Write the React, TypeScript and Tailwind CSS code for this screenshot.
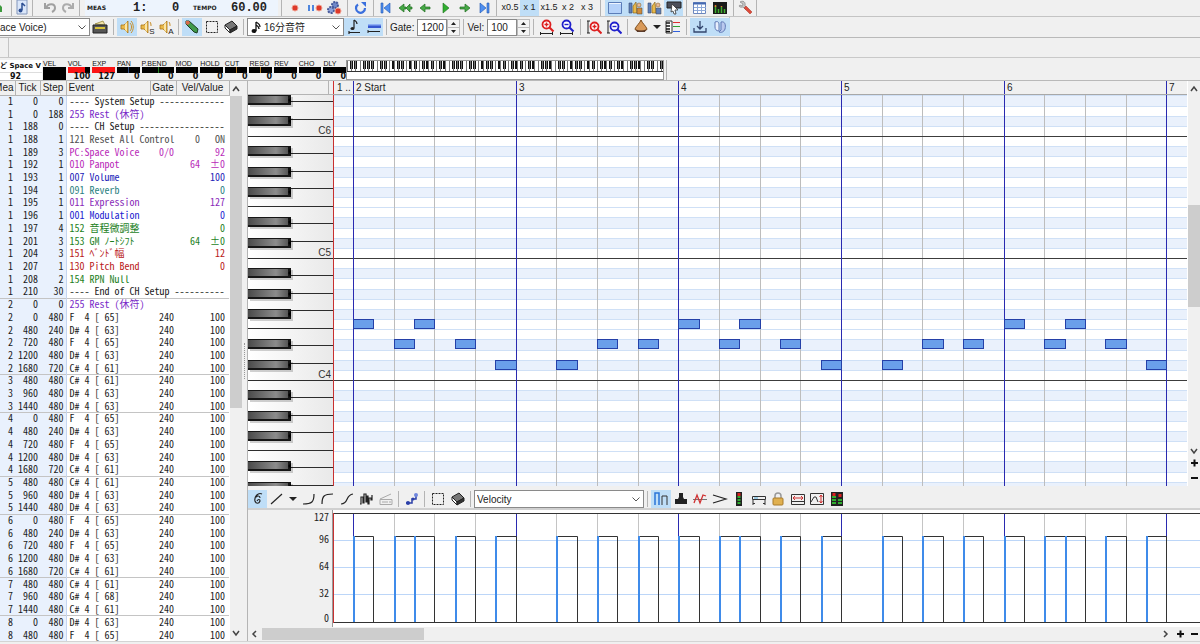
import type { ReactNode } from 'react'
import clsx from 'clsx'

type Row = {
  mea: number
  tick: number
  step: number
  event: string
  gate?: string
  mid?: string
  vel?: string
  color?: string
}

const setup: Row[] = [
  { mea: 1, tick: 0, step: 0, event: '---- System Setup -------------' },
  { mea: 1, tick: 0, step: 188, event: '255 Rest (休符)', color: 'text-[#7a2bc8]' },
  { mea: 1, tick: 188, step: 0, event: '---- CH Setup -----------------' },
  { mea: 1, tick: 188, step: 1, event: '121 Reset All Control', mid: '0', vel: 'ON', color: 'text-[#505050]' },
  { mea: 1, tick: 189, step: 3, event: 'PC:Space Voice', gate: '0/0', vel: '92', color: 'text-[#b92bb9]' },
  { mea: 1, tick: 192, step: 1, event: '010 Panpot', mid: '64', vel: '±0', color: 'text-[#b92bb9]' },
  { mea: 1, tick: 193, step: 1, event: '007 Volume', vel: '100', color: 'text-[#1d1db8]' },
  { mea: 1, tick: 194, step: 1, event: '091 Reverb', vel: '0', color: 'text-[#2b7f7f]' },
  { mea: 1, tick: 195, step: 1, event: '011 Expression', vel: '127', color: 'text-[#8a2bb9]' },
  { mea: 1, tick: 196, step: 1, event: '001 Modulation', vel: '0', color: 'text-[#1d1dd0]' },
  { mea: 1, tick: 197, step: 4, event: '152 音程微調整', vel: '0', color: 'text-[#1d7f1d]' },
  { mea: 1, tick: 201, step: 3, event: '153 GM ﾉｰﾄｼﾌﾄ', mid: '64', vel: '±0', color: 'text-[#1d7f1d]' },
  { mea: 1, tick: 204, step: 3, event: '151 ﾍﾞﾝﾄﾞ幅', vel: '12', color: 'text-[#b92020]' },
  { mea: 1, tick: 207, step: 1, event: '130 Pitch Bend', vel: '0', color: 'text-[#b92020]' },
  { mea: 1, tick: 208, step: 2, event: '154 RPN Null', color: 'text-[#1d7f1d]' },
  { mea: 1, tick: 210, step: 30, event: '---- End of CH Setup ----------' },
  { mea: 2, tick: 0, step: 0, event: '255 Rest (休符)', color: 'text-[#7a2bc8]' }
]

// measure, tick, step, key number
const notes = [
  [2, 0, 480, 65],
  [2, 480, 240, 63],
  [2, 720, 480, 65],
  [2, 1200, 480, 63],
  [2, 1680, 720, 61],
  [3, 480, 480, 61],
  [3, 960, 480, 63],
  [3, 1440, 480, 63],
  [4, 0, 480, 65],
  [4, 480, 240, 63],
  [4, 720, 480, 65],
  [4, 1200, 480, 63],
  [4, 1680, 720, 61],
  [5, 480, 480, 61],
  [5, 960, 480, 63],
  [5, 1440, 480, 63],
  [6, 0, 480, 65],
  [6, 480, 240, 63],
  [6, 720, 480, 65],
  [6, 1200, 480, 63],
  [6, 1680, 720, 61],
  [7, 480, 480, 61],
  [7, 960, 480, 68],
  [7, 1440, 480, 61],
  [8, 0, 480, 63],
  [8, 480, 480, 65]
]

const names: Record<number, string> = { 61: 'C#', 63: 'D#', 65: 'F ', 68: 'G#' }

const rows: Row[] = [
  ...setup,
  ...notes.map(([mea, tick, step, key]) => ({
    mea,
    tick,
    step,
    event: `${names[key]} 4 [ ${key}]`,
    gate: '240',
    vel: '100'
  }))
]

const MEASURE = 162.65
const xAt = (mea: number, tick: number) => Math.round(20 + (mea - 2 + tick / 1920) * MEASURE)
const yAt = (row: number) => Math.round(41 + (row * 122) / 12)

const visible = notes.filter(([mea]) => mea < 7)
const bars = [2, 3, 4, 5, 6, 7]
const beats = bars.flatMap((m) => [480, 960, 1440].map((t) => xAt(m, t)))
const semis = Array.from({ length: 100 }, (_, i) => i - 5)
const isBlack = (row: number) => [1, 3, 5, 8, 10].includes(((row % 12) + 12) % 12)

const Sep = () => <span className="mx-[3px] h-4 w-px shrink-0 bg-[#b4b4b4]" />

type ToolProps = { label: string; on?: boolean; w?: string; children: ReactNode }

const Tool = ({ label, on, w = 'w-5', children }: ToolProps) => (
  <button
    type="button"
    aria-label={label}
    className={clsx('flex h-full shrink-0 items-center justify-center', w, on && 'bg-[#bfdef7]')}
  >
    {children}
  </button>
)

const Ico = ({ children }: { children: ReactNode }) => (
  <svg width="16" height="16" viewBox="0 0 16 16" fill="none" className="shrink-0">
    {children}
  </svg>
)

const Speaker = ({ tag }: { tag?: string }) => (
  <span className="relative">
    <Ico>
      <path d="M2 6h3l4-4v12l-4-4H2z" fill="#e9b94a" stroke="#a87416" strokeWidth=".8" />
      <path d="M6 5l2-2v10l-2-2z" fill="#fbe6a8" />
      <path d={tag ? 'M11 3c1 1 1 3 1 4' : 'M11 4c2 2 2 6 0 8M12 2c3 3 3 9 0 12'} stroke="#c98f2a" />
    </Ico>
    {tag && <span className="absolute -bottom-px right-0 text-[8px] leading-[8px] text-[#222]">{tag}</span>}
  </span>
)

const Eraser = () => (
  <Ico>
    <path d="M2 6l7-4 5 5-7 4z" fill="#777" stroke="#222" />
    <path d="M2 6v3l5 5v-3z" fill="#fff" stroke="#222" />
    <path d="M7 11l7-4v3l-7 4z" fill="#333" stroke="#222" />
  </Ico>
)

const Marquee = () => (
  <Ico>
    <rect x="2.5" y="2.5" width="11" height="11" stroke="#222" strokeDasharray="2 1" />
  </Ico>
)

const Arrow = ({ left, double }: { left?: boolean; double?: boolean }) => (
  <Ico>
    <g transform={left ? 'matrix(-1 0 0 1 16 0)' : undefined} fill="#45a845" stroke="#1f6f1f" strokeWidth=".7">
      {double && <path d="M1 7h2V4l4 4-4 4V9H1z" />}
      <path d={double ? 'M7 7h2V4l5 4-5 4V9H7z' : 'M3 7h5V4l5 4-5 4V9H3z'} />
    </g>
  </Ico>
)

const Skip = ({ back }: { back?: boolean }) => (
  <Ico>
    <g transform={back ? 'matrix(-1 0 0 1 16 0)' : undefined} fill="#4f8ff0" stroke="#1f55b0" strokeWidth=".6">
      <path d="M4 3l6 5-6 5z" />
      <path d="M11 3h2v10h-2z" />
    </g>
  </Ico>
)

const Zoom = ({ color, minus, tall }: { color: string; minus?: boolean; tall?: boolean }) => (
  <Ico>
    <g transform={tall ? 'translate(1 2)' : undefined} stroke={color}>
      <circle cx="7.5" cy="5.5" r="4" strokeWidth="1.8" fill="#fff" />
      <path d="M10.500 8.500l4 4" strokeWidth="2.200" />
      <path d={minus ? 'M5.500 5.500h4' : 'M5.500 5.500h4M7.500 3.500v4'} strokeWidth="1.400" />
    </g>
    <path d={tall ? 'M2 2v12M1 2h3M1 14h3' : 'M1 14.500h13M1.500 13v3M13.500 13v3'} stroke="#222" />
  </Ico>
)

const Players = ({ hot }: { hot?: boolean }) => (
  <Ico>
    <path d="M2 3h3v10H2z" fill="#5f7fb8" stroke="#33466e" strokeWidth=".6" />
    <path d="M6 6l3-4 1 11H6z" fill="#e9b94a" stroke="#7a5412" strokeWidth=".6" />
    <circle cx="12" cy="5" r="2" fill="#e8b898" stroke="#7a5412" strokeWidth=".5" />
    <path d="M10 8h5v6h-5z" fill={hot ? '#5f7fb8' : '#d08a3a'} stroke="#444" strokeWidth=".5" />
  </Ico>
)

const Chevron = ({ dir }: { dir: 'up' | 'down' | 'left' | 'right' }) => {
  const d = {
    up: 'M3 8l3-4 3 4',
    down: 'M3 4l3 4 3-4',
    left: 'M8 3L5 6l3 3',
    right: 'M4 3l3 3-3 3'
  }
  return (
    <svg width="12" height="12" viewBox="0 0 12 12" fill="none" className="shrink-0">
      <path d={d[dir]} stroke="#444" strokeWidth="1.500" />
    </svg>
  )
}

const Sign = ({ plus }: { plus?: boolean }) => (
  <svg width="12" height="12" viewBox="0 0 12 12" className="shrink-0">
    <path d={plus ? 'M3 6h7M6.500 2.500v7' : 'M3 6h7'} stroke="#111" strokeWidth="2" />
  </svg>
)

const Combo = ({ label, value, w, children }: { label: string; value: string; w: string; children?: ReactNode }) => (
  <div className={clsx('flex h-[18px] shrink-0 items-center border border-[#8a8a8a] bg-white', w)}>
    {children}
    <select aria-label={label} className="h-4 min-w-0 flex-1 appearance-none bg-white text-[10px] text-[#222]">
      <option>{value}</option>
    </select>
    <svg width="12" height="12" viewBox="0 0 12 12" fill="none" className="mr-px shrink-0">
      <path d="M2.500 4.500L6 8l3.500-3.500" stroke="#555" />
    </svg>
  </div>
)

const Spin = ({ label, value }: { label: string; value: string }) => (
  <div className="flex h-[17px] items-center">
    <label className="flex h-full items-center gap-[3px]">
      {label}:
      <input
        defaultValue={value}
        className="h-full w-[30px] border border-[#8a8a8a] bg-white pl-[3px] text-[10px] text-[#222]"
      />
    </label>
    <button type="button" aria-label={`Step ${label}`} className="h-full w-[13px] border border-[#bbb] bg-[#f4f4f4]">
      <svg width="11" height="15" viewBox="0 0 11 15">
        <path d="M3 5h5L5.500 2zM3 10h5l-2.500 3z" fill="#222" />
        <path d="M0 7.500h11" stroke="#bbb" />
      </svg>
    </button>
  </div>
)

const TransportBar = () => (
  <div className="flex h-[17px] items-center overflow-hidden border-b border-[#c4c4c4]">
    <div className="flex h-4 w-[757px] shrink-0 items-center border-r border-[#b4b4b4]">
      <Tool label="New" w="w-2">
        <Ico>
          <path d="M0 5h4l2 2v5H0z" fill="#3e9a3e" />
        </Ico>
      </Tool>
      <Sep />
      <Tool label="Song file" w="w-[14px]">
        <Ico>
          <path d="M3 0h10v14H3z" fill="#dbe7fa" stroke="#8296bb" />
          <path d="M8 3v7M8 3l3 3" stroke="#2d4f93" strokeWidth="1.500" />
          <circle cx="6.500" cy="10.500" r="2" fill="#2d4f93" />
        </Ico>
      </Tool>
      <Sep />
      <span className="w-1" />
      <Tool label="Undo" w="w-[19px]">
        <Ico>
          <path d="M3 3v5h5M4 8c2-5 9-5 9 0 0 2-1 3-3 4" stroke="#a0a0a0" strokeWidth="2" />
        </Ico>
      </Tool>
      <Tool label="Redo" w="w-[17px]">
        <Ico>
          <path d="M13 3v5H8M12 8C10 3 3 3 3 8c0 2 1 3 3 4" stroke="#acacac" strokeWidth="2" />
        </Ico>
      </Tool>
      <Sep />
      <span className="w-[2px]" />
      <div className="flex h-full w-[193px] items-center bg-[#edf4fd] font-['Liberation_Mono',monospace] text-xs font-bold text-[#222]">
        <span className="w-12 pl-[2px] font-['DejaVu_Sans',sans-serif] text-[6px]">MEAS</span>
        <span className="w-[39px]">1:</span>
        <span className="w-[21px]">0</span>
        <span className="w-[38px] font-['DejaVu_Sans',sans-serif] text-[6px]">TEMPO</span>
        <span>60.00</span>
      </div>
      <Sep />
      <Tool label="Record">
        <Ico>
          <circle cx="8" cy="8" r="3" fill="#dd3a2a" stroke="#f0a090" />
        </Ico>
      </Tool>
      <Tool label="Pause record" w="w-[19px]">
        <Ico>
          <path d="M1 5h2v6H1zM5 5h2v6H5z" fill="#4f86dd" />
          <circle cx="12" cy="8" r="3" fill="#dd3a2a" stroke="#f0a090" />
        </Ico>
      </Tool>
      <Tool label="Record settings">
        <Ico>
          <circle cx="9" cy="5" r="3" fill="#7088c8" stroke="#46599a" strokeWidth="2" strokeDasharray="2 1" />
          <circle cx="5" cy="10" r="3" fill="#8da0d8" stroke="#46599a" strokeWidth="2" strokeDasharray="2 1" />
          <circle cx="12" cy="11" r="3" fill="#dd3a2a" stroke="#f0a090" />
        </Ico>
      </Tool>
      <Sep />
      <Tool label="Loop" w="w-[19px]">
        <Ico>
          <path d="M5 4.500a4.500 4.500 0 1 0 7 3.500" stroke="#3a6fdd" strokeWidth="2.200" />
          <path d="M8 2h5v5z" fill="#3a6fdd" />
        </Ico>
      </Tool>
      <Sep />
      <Tool label="To start" w="w-[18px]"><Skip back /></Tool>
      <Tool label="Rewind"><Arrow left double /></Tool>
      <Tool label="Back"><Arrow left /></Tool>
      <Tool label="Play">
        <Ico>
          <path d="M6 3l6 5-6 5z" fill="#2fae2f" stroke="#1f6f1f" strokeWidth=".6" />
        </Ico>
      </Tool>
      <Tool label="Forward"><Arrow /></Tool>
      <Tool label="To end" w="w-[18px]"><Skip /></Tool>
      <Sep />
      <div className="flex h-full text-[9px] text-[#222]">
        <Tool label="Speed 0.5">x0.5</Tool>
        <Tool label="Speed 1" on w="w-[19px]">x 1</Tool>
        <Tool label="Speed 1.5">x1.5</Tool>
        <Tool label="Speed 2" w="w-[18px]">x 2</Tool>
        <Tool label="Speed 3">x 3</Tool>
      </div>
      <Sep />
      <span className="w-px" />
      <Tool label="List" on>
        <Ico>
          <path d="M1.500 2.500h13v11h-13z" fill="#b5d2fa" stroke="#5b7db8" />
          <path d="M2 3.500h12" stroke="#eef5ff" />
        </Ico>
      </Tool>
      <Tool label="Staff view" on w="w-[19px]"><Players /></Tool>
      <Tool label="Band view"><Players hot /></Tool>
      <Tool label="Pointer view" on w="w-[19px]">
        <Ico>
          <path d="M1 2h14v6H1z" fill="#4c4f5a" stroke="#222" />
          <path d="M6 4l6 6-3 0 1 4-2 0-1-3-2 1z" fill="#fff" stroke="#333" strokeWidth=".8" />
        </Ico>
      </Tool>
      <Sep />
      <Tool label="Table">
        <Ico>
          <path d="M1.500 2.500h12v11h-12z" fill="#fff" stroke="#6b86bd" />
          <path d="M1 3.500h13" stroke="#4468b0" strokeWidth="2" />
          <path d="M2 7.500h12M2 10.500h12M5.500 4v9M9.500 4v9" stroke="#8ea9d8" />
        </Ico>
      </Tool>
      <Tool label="Meters">
        <Ico>
          <path d="M1 2h14v12H1z" fill="#1a1a1a" />
          <path d="M3.500 6v7M6.500 9v4M9.500 7v6M12.500 9v4" stroke="#3fae2f" strokeWidth="1.500" />
          <path d="M3.500 5v2M9.500 6v1" stroke="#e07b2a" strokeWidth="1.500" />
        </Ico>
      </Tool>
      <Sep />
      <Tool label="Settings" w="w-[17px]">
        <Ico>
          <path d="M2 2c3-2 6 0 5 4l3 3-2 1-3-3C2 8 0 6 2 5l2 1 1-2z" fill="#c4c4c4" stroke="#777" strokeWidth=".6" />
          <path d="M8 6l6 6-2 2-6-6z" fill="#dd4a3a" stroke="#a03020" strokeWidth=".5" />
        </Ico>
      </Tool>
    </div>
  </div>
)

const EditBar = () => (
  <div className="flex h-[21px] items-center overflow-hidden border-b border-[#b9b9b9] bg-[#f0f0f0]">
    <div className="flex h-5 w-[730px] shrink-0 items-center border-r border-[#c4c4c4] py-px text-[10px] text-[#222]">
      <Combo label="Patch" value="ace Voice)" w="w-[90px] border-l-0" />
      <Tool label="Voice box">
        <Ico>
          <path d="M3 5l8-3 2 4z" fill="#f1e3a8" stroke="#8a7a2a" strokeWidth=".7" />
          <path d="M1 6h14v8H1z" fill="#555" stroke="#222" />
          <path d="M3 9h10" stroke="#d8c23a" strokeWidth="2" />
        </Ico>
      </Tool>
      <Sep />
      <Tool label="Monitor" on><Speaker /></Tool>
      <Tool label="Solo monitor" w="w-[19px]"><Speaker tag="S" /></Tool>
      <Tool label="All monitor" w="w-[19px]"><Speaker tag="A" /></Tool>
      <Sep />
      <Tool label="Pencil" on>
        <Ico>
          <path d="M2 2l3 0 9 8-1 4-3-1-8-8z" fill="#3f9a4a" stroke="#1c3f22" />
          <path d="M2 2l3 0 1 2-2 2-2-1z" fill="#d86a4a" />
        </Ico>
      </Tool>
      <Tool label="Select area" w="w-[19px]"><Marquee /></Tool>
      <Tool label="Eraser" w="w-[19px]"><Eraser /></Tool>
      <Sep />
      <Combo label="Note length" value="16分音符" w="w-[97px]">
        <Ico>
          <path d="M8 3v9M8 3c2 1 4 2 4 5M8 6c2 1 3 2 3 4" stroke="#111" strokeWidth="1.300" />
          <ellipse cx="6" cy="12" rx="2.500" ry="2" fill="#111" />
        </Ico>
      </Combo>
      <Tool label="Step note" on>
        <Ico>
          <path d="M8 1v8M8 1c2 1 3 2 3 4M3 13.500h11M3 12v3" stroke="#222" strokeWidth="1.200" />
          <ellipse cx="6.500" cy="9.500" rx="2" ry="1.500" fill="#222" />
        </Ico>
      </Tool>
      <Tool label="Gate bar" on w="w-[19px]">
        <Ico>
          <path d="M2 5h13v4H2z" fill="#3557d0" />
          <path d="M2 5h13v1.500H2z" fill="#8fb0f5" />
          <path d="M2 12.500h12M2 11v3" stroke="#222" />
        </Ico>
      </Tool>
      <Sep />
      <Spin label="Gate" value="1200" />
      <Sep />
      <span className="w-px" />
      <Spin label="Vel" value="100" />
      <Sep />
      <span className="w-px" />
      <Tool label="Zoom in horizontally"><Zoom color="#dd2020" /></Tool>
      <Tool label="Zoom out horizontally"><Zoom color="#2020cc" minus /></Tool>
      <Sep />
      <Tool label="Zoom in vertically"><Zoom color="#dd2020" tall /></Tool>
      <Tool label="Zoom out vertically"><Zoom color="#2020cc" minus tall /></Tool>
      <Sep />
      <Tool label="Colour">
        <Ico>
          <path d="M8 1c1 3 5 6 6 9 0 3-12 3-12 0 1-3 5-6 6-9z" fill="#d99a5a" stroke="#7a4a1a" />
          <path d="M3 10c2 2 8 2 10 0l-1 3H4z" fill="#5a3a2a" />
        </Ico>
      </Tool>
      <Tool label="Colour menu" w="w-3">
        <svg width="8" height="8" viewBox="0 0 8 8"><path d="M0 2h8L4 6z" fill="#222" /></svg>
      </Tool>
      <Tool label="Tracks">
        <Ico>
          <path d="M1 2h6v12H1z" fill="#fff" stroke="#333" />
          <path d="M1 4h4M1 7h4M1 10h4M1 12.500h4" stroke="#111" strokeWidth="1.500" />
          <path d="M8 3.500h7" stroke="#dd3030" />
          <path d="M8 7.500h7" stroke="#30a030" />
          <path d="M8 12.500h7" stroke="#3060dd" />
        </Ico>
      </Tool>
      <Sep />
      <Tool label="Insert" on>
        <Ico>
          <path d="M8 2v8M5 7l3 3 3-3M2 9v4h12V9" stroke="#33466e" strokeWidth="1.300" />
        </Ico>
      </Tool>
      <Tool label="Magnet" on>
        <Ico>
          <path d="M3 3c3-1 4 0 4 3v6C4 12 3 10 3 8z" fill="#e8effc" stroke="#5f79b5" />
          <path d="M9 3c4-1 5 3 4 7-1 3-4 4-6 3l2-2z" fill="#b9c9ee" stroke="#5f79b5" />
        </Ico>
      </Tool>
    </div>
  </div>
)

const meters = [
  { name: 'VOL', value: 100, fill: 'bg-[#fa1414] w-[78%]' },
  { name: 'EXP', value: 127, fill: 'bg-[#fa1414] w-full' },
  { name: 'PAN', value: 0, fill: 'bg-[#2c4a80] w-px ml-[11px]' },
  { name: 'P.BEND', value: 0, fill: 'bg-[#1f7f1f] w-px ml-4' },
  { name: 'MOD', value: 0, fill: '' },
  { name: 'HOLD', value: 0, fill: '' },
  { name: 'CUT', value: 0, fill: 'bg-[#b07a2a] w-px ml-[11px]' },
  { name: 'RESO', value: 0, fill: 'bg-[#b07a2a] w-px ml-[11px]' },
  { name: 'REV', value: 0, fill: '' },
  { name: 'CHO', value: 0, fill: '' },
  { name: 'DLY', value: 0, fill: '' }
]

const MiniKeys = () => (
  <svg width="318" height="20" className="shrink-0 border border-[#999] bg-white">
    {Array.from({ length: 75 }, (_, i) => {
      const x = Math.round(i * 4.24)
      return (
        <g key={i}>
          <rect x={x} y="0" width="1" height="10" fill="#777" />
          {![2, 6].includes(i % 7) && <rect x={x + 3} y="0" width="3" height="8" fill="#111" />}
        </g>
      )
    })}
    <rect x="0" y="10" width="100%" height="1" fill="#333" />
  </svg>
)

const ChannelStrip = () => (
  <div className="flex h-[23px] items-start overflow-hidden border-b border-[#b9b9b9] bg-[#f0f0f0] pt-[2px]">
    <div className="h-5 w-[42px] shrink-0 overflow-hidden bg-white font-['DejaVu_Sans','Noto_Sans_CJK_JP',sans-serif] font-bold text-[#111]">
      <div className="flex h-3 items-center whitespace-nowrap text-[7px]">ど Space V</div>
      <div className="h-2 border-t border-[#ddd] pl-[10px] text-[8px] leading-[8px]">92</div>
    </div>
    <div className="flex w-[304px] shrink-0 gap-[2px] pl-px">
      <div className="min-w-0 flex-1">
        <div className="h-[7px] text-[7px] leading-[8px] text-[#111]">VEL</div>
        <div className="h-[13px] bg-black" />
      </div>
      {meters.map((m) => (
        <div key={m.name} className={m.name === 'P.BEND' ? 'w-8' : 'min-w-0 flex-1'}>
          <div className="h-[7px] text-[7px] leading-[8px] text-[#111]">{m.name}</div>
          <div className="h-[6px] bg-black">
            <div className={clsx('h-full', m.fill)} />
          </div>
          <div className="h-[7px] text-right font-['DejaVu_Sans',sans-serif] text-[8px] font-bold leading-[8px] text-[#111]">
            {m.value}
          </div>
        </div>
      ))}
    </div>
    <MiniKeys />
    <span className="ml-[2px] h-full w-px bg-[#b4b4b4]" />
  </div>
)

const th = 'border-r border-[#b4b4b4] p-0 font-normal leading-3'

const EventList = () => (
  <div className="flex w-[243px] shrink-0 overflow-hidden">
    <table className="h-full w-[229px] table-fixed border-collapse bg-white text-[10px] leading-[10px] text-[#1c1c1c]">
      <colgroup>
        <col className="w-[15px]" />
        <col className="w-[25px]" />
        <col className="w-[26px]" />
        <col className="w-[84px]" />
        <col className="w-[26px]" />
        <col className="w-6" />
        <col className="w-[29px]" />
      </colgroup>
      <thead>
        <tr className="h-[14px] border-b border-[#b4b4b4] bg-[#f0f0f0]">
          <th className={th}><span className="flex justify-end pr-px">Mea</span></th>
          <th className={th}>Tick</th>
          <th className={th}>Step</th>
          <th className={clsx(th, 'pl-[2px] text-left')}>Event</th>
          <th className={th}>Gate</th>
          <th colSpan={2} className={th}>Vel/Value</th>
        </tr>
      </thead>
      <tbody className="whitespace-pre font-['Noto_Sans_Mono_CJK_JP','Noto_Sans_CJK_JP',monospace]">
        {rows.map((r, i) => (
          <tr
            key={i}
            className={clsx('border-t', i > 0 && rows[i - 1].mea !== r.mea ? 'border-[#c4c4c4]' : 'border-transparent')}
          >
            <td className="bg-[#e9f1fd] p-0 pb-px pr-[2px] text-right">{r.mea}</td>
            <td className="bg-[#e9f1fd] p-0 pb-px pr-[2px] text-right">{r.tick}</td>
            <td className="border-r border-r-[#c5d6f0] bg-[#e9f1fd] p-0 pb-px pr-[2px] text-right">{r.step}</td>
            <td className={clsx('p-0 pb-px pl-[3px]', r.color)}>{r.event}</td>
            <td className={clsx('p-0 pb-px pr-[2px] text-right', r.color)}>{r.gate}</td>
            <td className={clsx('p-0 pb-px text-right', r.color)}>{r.mid}</td>
            <td className={clsx('p-0 pb-px pr-1 text-right', r.color)}>{r.vel}</td>
          </tr>
        ))}
      </tbody>
    </table>
    <div className="flex w-[14px] flex-col items-center bg-[#f0f0f0] py-[2px]">
      <Chevron dir="up" />
      <div className="mt-px h-[312px] w-3 bg-[#cdcdcd]" />
      <div className="flex-1" />
      <Chevron dir="down" />
    </div>
  </div>
)

const Keyboard = () => (
  <div className="flex w-[85px] shrink-0 flex-col">
    <div className="h-[14px] border-b border-[#b4b4b4] bg-[#f0f0f0] pr-1">
      <div className="h-full border-r border-[#b4b4b4]" />
    </div>
    <div className="relative min-h-0 flex-1 overflow-hidden">
      <svg width="85" height="100%" className="absolute inset-0">
        <defs>
          <linearGradient id="ivory">
            <stop offset="0" stopColor="#fff" />
            <stop offset="1" stopColor="#e9e9e9" />
          </linearGradient>
          <linearGradient id="ebony">
            <stop offset="0" stopColor="#4a4a4a" />
            <stop offset=".7" stopColor="#8c8c8c" />
            <stop offset="1" stopColor="#555" />
          </linearGradient>
        </defs>
        <rect width="85" height="100%" fill="url(#ivory)" />
        {Array.from({ length: 60 }, (_, i) => (
          <rect key={i} x="0" y={Math.round(41 + ((i - 2) * 122) / 7)} width="85" height="1" fill="#2c2c2c" />
        ))}
        {semis.filter(isBlack).map((k) => (
          <g key={k}>
            <rect x="2" y={yAt(k) + 2} width="43" height="10" fill="#000" opacity=".18" />
            <rect x="0" y={yAt(k)} width="43" height="10" fill="#161616" />
            <rect x="0" y={yAt(k) + 1} width="40" height="7" fill="url(#ebony)" />
            <path d={`M43 ${yAt(k) + 2}l-3 3 3 3z`} fill="#000" />
          </g>
        ))}
      </svg>
      {[6, 5, 4].map((n, i) => (
        <span
          key={n}
          className="absolute right-[2px] text-[10px] leading-3 text-[#333]"
          style={{ top: 30 + i * 122 }}
        >
          C{n}
        </span>
      ))}
    </div>
  </div>
)

const Ruler = () => (
  <div className="flex h-[14px] overflow-hidden border-b border-[#a8a8a8] bg-[#f0f0f0] text-[10px] leading-[14px] text-[#222]">
    <span className="shrink-0 border-l border-[#d03030] pl-[3px]" style={{ width: xAt(2, 0) }}>
      1 ..
    </span>
    {bars.map((m) => (
      <span
        key={m}
        className="shrink-0 border-l border-[#2a2ab0] pl-[2px]"
        style={{ width: xAt(m + 1, 0) - xAt(m, 0) }}
      >
        {m === 2 ? '2 Start' : m}
      </span>
    ))}
  </div>
)

const Grid = () => (
  <svg width="100%" height="100%" className="absolute inset-0 bg-white">
    {semis.map((k) => (
      <g key={k}>
        {isBlack(k) && <rect x="0" y={yAt(k)} width="100%" height={yAt(k + 1) - yAt(k)} fill="#eaf1fc" />}
        <rect x="0" y={yAt(k)} width="100%" height="1" fill="#cfe0f6" />
      </g>
    ))}
    {beats.map((x) => (
      <rect key={x} x={x} y="0" width="1" height="100%" fill="#bdbdbd" />
    ))}
    {semis.filter((k) => k % 12 === 0).map((k) => (
      <rect key={k} x="0" y={yAt(k)} width="100%" height="1" fill="#3c3c3c" />
    ))}
    {bars.map((m) => (
      <rect key={m} x={xAt(m, 0)} y="0" width="1" height="100%" fill="#2a2ab0" />
    ))}
    <rect x="0" y="0" width="1" height="100%" fill="#c83030" />
    {visible.map(([mea, tick, , key], i) => {
      const x = xAt(mea, tick)
      return (
        <rect
          key={i}
          x={x + 0.5}
          y={yAt(83 - key) + 0.5}
          width={xAt(mea, tick + 240) - x}
          height="9"
          fill="#6a9fea"
          stroke="#2440a8"
        />
      )
    })}
  </svg>
)

const PianoRoll = () => (
  <div className="flex min-h-0 flex-1">
    <Keyboard />
    <div className="flex min-w-0 flex-1 flex-col">
      <Ruler />
      <div className="relative min-h-0 flex-1 overflow-hidden">
        <Grid />
      </div>
    </div>
    <div className="flex w-[13px] flex-col items-center border-l border-white bg-[#f0f0f0] py-[2px]">
      <Chevron dir="up" />
      <div className="h-[110px]" />
      <div className="h-[102px] w-3 bg-[#cdcdcd]" />
      <div className="flex-1" />
      <Chevron dir="down" />
      <Sign plus />
      <span className="h-[3px]" />
      <Sign />
    </div>
  </div>
)

const Curve = ({ d }: { d: string }) => (
  <Ico>
    <path d={d} stroke="#222" strokeWidth="1.200" />
  </Ico>
)

const ControllerBar = () => (
  <div className="flex h-6 shrink-0 items-center border-b-2 border-[#d0d0d0] bg-[#f0f0f0] pt-1 text-[10px]">
    <Tool label="Freehand" on w="w-[19px]">
      <Curve d="M12 3C8 1 4 6 5 10c1 3 4 3 5 0 0-2-2-2-3 0M6 6c1-1 4-2 4 1" />
    </Tool>
    <Tool label="Line"><Curve d="M2 13L13 3" /></Tool>
    <Tool label="Line menu" w="w-3">
      <svg width="8" height="8" viewBox="0 0 8 8"><path d="M0 2h8L4 6z" fill="#222" /></svg>
    </Tool>
    <Tool label="Curve in" w="w-[19px]"><Curve d="M2 13c9 0 11-2 11-10" /></Tool>
    <Tool label="Curve out" w="w-[19px]"><Curve d="M2 13C2 5 4 3 13 3" /></Tool>
    <Tool label="S curve" w="w-[19px]"><Curve d="M2 13c8 0 4-9 12-10" /></Tool>
    <Tool label="Random"><Curve d="M2 13h1V6h2v6h1V3h2v8h1V5h1v8h1V7h2v2h1V4" /></Tool>
    <Tool label="Scale values" w="w-[19px]">
      <Ico>
        <path d="M2 8l11-5M2 8.500h12v5H2zM4 11h6M12 10v2" stroke="#aaa" />
      </Ico>
    </Tool>
    <Sep />
    <Tool label="Link notes" w="w-[19px]">
      <Ico>
        <path d="M2 12h6V8h4V4" stroke="#2b3fa8" strokeWidth="1.500" />
        <circle cx="4" cy="12" r="2" fill="#2b3fa8" />
        <circle cx="9" cy="8" r="1.500" fill="#2b3fa8" />
        <circle cx="12" cy="4" r="2" fill="#6f86dd" />
      </Ico>
    </Tool>
    <Sep />
    <Tool label="Select area"><Marquee /></Tool>
    <Tool label="Eraser" w="w-[19px]"><Eraser /></Tool>
    <Sep />
    <Combo label="Controller" value="Velocity" w="w-[170px] pl-[2px]" />
    <Sep />
    <Tool label="Velocity" on>
      <Ico>
        <path d="M2 14V2h4v12" stroke="#2b74d8" strokeWidth="1.500" />
        <path d="M9 14V5h5v9" stroke="#333" />
      </Ico>
    </Tool>
    <Tool label="Stamp" w="w-[19px]">
      <Ico>
        <path d="M6 2h4v4l1 2h3v5H2V8h3l1-2z" fill="#222" />
      </Ico>
    </Tool>
    <Tool label="Wave">
      <Ico>
        <path d="M1 8.500h14" stroke="#555" strokeWidth=".8" />
        <path d="M2 12l3-8 3 8 3-8 3 1" stroke="#d03030" strokeWidth="1.300" />
      </Ico>
    </Tool>
    <Tool label="Accent" w="w-[19px]"><Curve d="M1 4l13 4-13 4" /></Tool>
    <Tool label="Level">
      <Ico>
        <path d="M5 1h6v14H5z" fill="#222" />
        <path d="M8 5v9" stroke="#2fae2f" strokeWidth="3" strokeDasharray="2 1" />
        <path d="M8 2v3" stroke="#dd2020" strokeWidth="3" />
      </Ico>
    </Tool>
    <Tool label="Range" w="w-[19px]">
      <Ico>
        <path d="M1.500 5.500h13v3h-13zM2 9v5M14 9v5M2 12.500h2M14 12.500h-2" stroke="#333" />
        <path d="M3 7h4" stroke="#4aa8d8" />
      </Ico>
    </Tool>
    <Tool label="Lock">
      <Ico>
        <path d="M5 8V5c0-4 6-4 6 0v3" stroke="#999" strokeWidth="1.500" />
        <rect x="3" y="7" width="10" height="7" rx="1" fill="#e0b050" stroke="#a87a2a" />
      </Ico>
    </Tool>
    <Tool label="Time stretch" w="w-[19px]">
      <Ico>
        <path d="M1.500 3.500h13v10h-13zM2 10.500h12" stroke="#333" />
        <path d="M3 7h10M5 5L3 7l2 2M11 5l2 2-2 2" stroke="#d03030" />
      </Ico>
    </Tool>
    <Tool label="Value stretch">
      <Ico>
        <path d="M1.500 2.500h13v11h-13zM2 11l3-5 2 0 2 5" stroke="#333" />
        <path d="M12 4v8M10.500 6L12 4l1.500 2M10.500 10l1.500 2 1.500-2" stroke="#d03030" />
      </Ico>
    </Tool>
    <Tool label="Mixer" w="w-[19px]">
      <Ico>
        <path d="M2 1h12v14H2z" fill="#222" />
        <path d="M5 5v9M11 8v6" stroke="#2fae2f" strokeWidth="4" strokeDasharray="2 1" />
        <path d="M5 2v3M11 3v3" stroke="#dd2020" strokeWidth="3" />
      </Ico>
    </Tool>
  </div>
)

const VelocityPane = () => (
  <div className="flex h-[117px] shrink-0">
    <div className="flex w-[85px] shrink-0 flex-col border-r border-[#999] bg-[#f0f0f0] pr-[3px] pt-px text-right font-['Noto_Sans_Mono_CJK_JP','Noto_Sans_CJK_JP',monospace] text-[10px] leading-3 text-[#222]">
      <span className="h-[22px]">127</span>
      <span className="h-[27px]">96</span>
      <span className="h-[27px]">64</span>
      <span className="h-[25px]">32</span>
      <span>0</span>
    </div>
    <svg height="117" className="min-w-0 flex-1 bg-white">
      {beats.map((x) => (
        <rect key={x} x={x} y="3" width="1" height="110" fill="#c4c4c4" />
      ))}
      {[30, 57, 84].map((y) => (
        <rect key={y} x="0" y={y} width="100%" height="1" fill="#bcd6f8" />
      ))}
      {bars.map((m) => (
        <rect key={m} x={xAt(m, 0)} y="3" width="1" height={m === 3 || m === 5 ? 110 : 24} fill="#2a2ab0" />
      ))}
      {visible.map(([mea, tick], i) => {
        const x = xAt(mea, tick)
        const end = xAt(mea, tick + 240)
        return <path key={i} d={`M${x + 2} 26.500H${end + 0.5}V112`} stroke="#333" fill="none" />
      })}
      {visible.map(([mea, tick], i) => (
        <rect key={i} x={xAt(mea, tick)} y="26" width="2" height="86" fill="#3f8bea" />
      ))}
      <rect x="0" y="3" width="100%" height="1" fill="#333" />
      <rect x="0" y="112" width="100%" height="1" fill="#333" />
      <rect x="0" y="3" width="1" height="110" fill="#c83030" />
    </svg>
  </div>
)

const App = () => {
  return (
    <main className="flex h-screen w-full flex-col overflow-hidden bg-[#f0f0f0] font-['Liberation_Sans','Noto_Sans_CJK_JP',sans-serif]">
      <TransportBar />
      <EditBar />
      <div className="h-5 shrink-0 border-b border-[#c9c9c9] pl-2">
        <div className="h-full border-l border-[#c4c4c4]" />
      </div>
      <ChannelStrip />
      <div className="flex min-h-0 flex-1">
        <EventList />
        <div className="flex w-[5px] shrink-0 items-center border-r border-[#b4b4b4]">
          <span className="ml-px h-9 w-px border-l border-dotted border-[#999]" />
        </div>
        <div className="flex min-w-0 flex-1 flex-col">
          <PianoRoll />
          <ControllerBar />
          <VelocityPane />
          <div className="flex h-[14px] shrink-0 items-center bg-[#f0f0f0]">
            <Chevron dir="left" />
            <div className="ml-[2px] h-3 w-[162px] bg-[#cdcdcd]" />
            <div className="flex-1" />
            <Chevron dir="right" />
            <span className="w-[2px]" />
            <Sign plus />
            <span className="w-[2px]" />
            <Sign />
          </div>
        </div>
      </div>
      <div className="h-[3px] shrink-0 border-t border-[#d4d4d4]" />
    </main>
  )
}

export default App
